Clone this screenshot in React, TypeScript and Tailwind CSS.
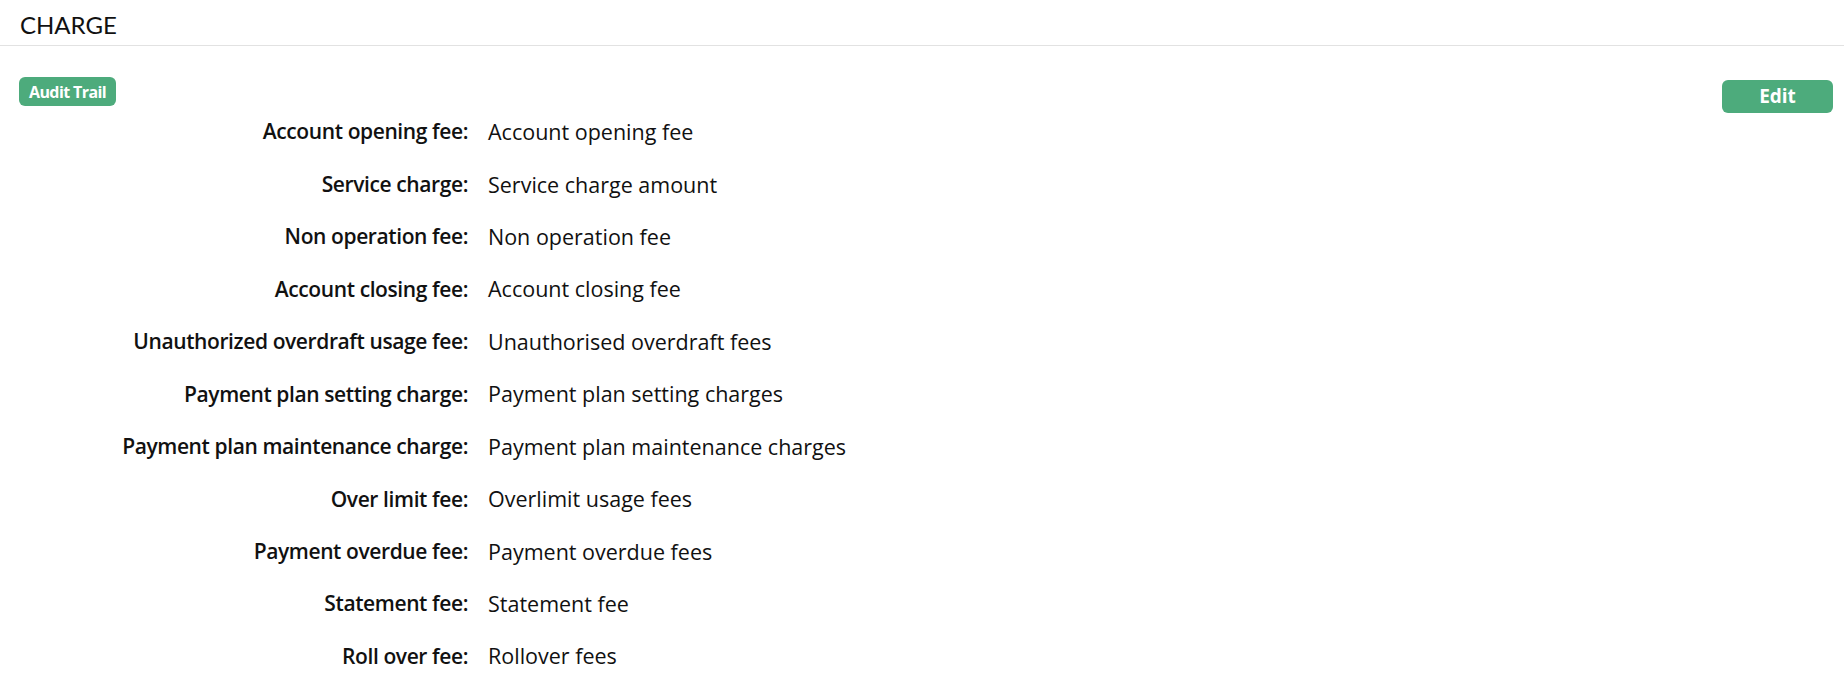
import React from 'react';

const charges: { label: string; value: string }[] = [
    { label: 'Account opening fee:', value: 'Account opening fee' },
    { label: 'Service charge:', value: 'Service charge amount' },
    { label: 'Non operation fee:', value: 'Non operation fee' },
    { label: 'Account closing fee:', value: 'Account closing fee' },
    { label: 'Unauthorized overdraft usage fee:', value: 'Unauthorised overdraft fees' },
    { label: 'Payment plan setting charge:', value: 'Payment plan setting charges' },
    { label: 'Payment plan maintenance charge:', value: 'Payment plan maintenance charges' },
    { label: 'Over limit fee:', value: 'Overlimit usage fees' },
    { label: 'Payment overdue fee:', value: 'Payment overdue fees' },
    { label: 'Statement fee:', value: 'Statement fee' },
    { label: 'Roll over fee:', value: 'Rollover fees' },
];

export default function App() {
    return (
        <div className="min-h-screen bg-white text-[#111] font-['Open_Sans',sans-serif]">
            <div className="h-[46px] px-[20px] flex items-center border-b border-[#e2e2e2]">
                <h1 className="text-[24px] font-normal leading-none pt-[4px] font-['Lato',sans-serif]">CHARGE</h1>
            </div>

            <div className="flex justify-between pl-[19px] pr-[11px]">
                <div className="flex flex-col">
                    <div className="mt-[31px] self-start">
                        <button className="h-[29px] px-[10px] rounded-[6px] bg-[#4dab7c] text-white text-[16px] font-bold leading-none tracking-[-0.6px]">
                            Audit Trail
                        </button>
                    </div>
                    <dl className="grid grid-cols-[449px_auto] gap-x-[20px]">
                        {charges.map((c) => (
                            <React.Fragment key={c.label}>
                                <dt className="h-[52.45px] flex items-center justify-end text-[21px] font-semibold tracking-[-0.4px] whitespace-nowrap">
                                    {c.label}
                                </dt>
                                <dd className="h-[52.45px] flex items-center text-[21.5px] whitespace-nowrap">
                                    {c.value}
                                </dd>
                            </React.Fragment>
                        ))}
                    </dl>
                </div>
                <div className="mt-[34px]">
                    <button className="w-[111px] h-[33px] rounded-[6px] bg-[#4dab7c] text-white text-[19px] font-bold leading-none">
                        Edit
                    </button>
                </div>
            </div>
        </div>
    );
}
